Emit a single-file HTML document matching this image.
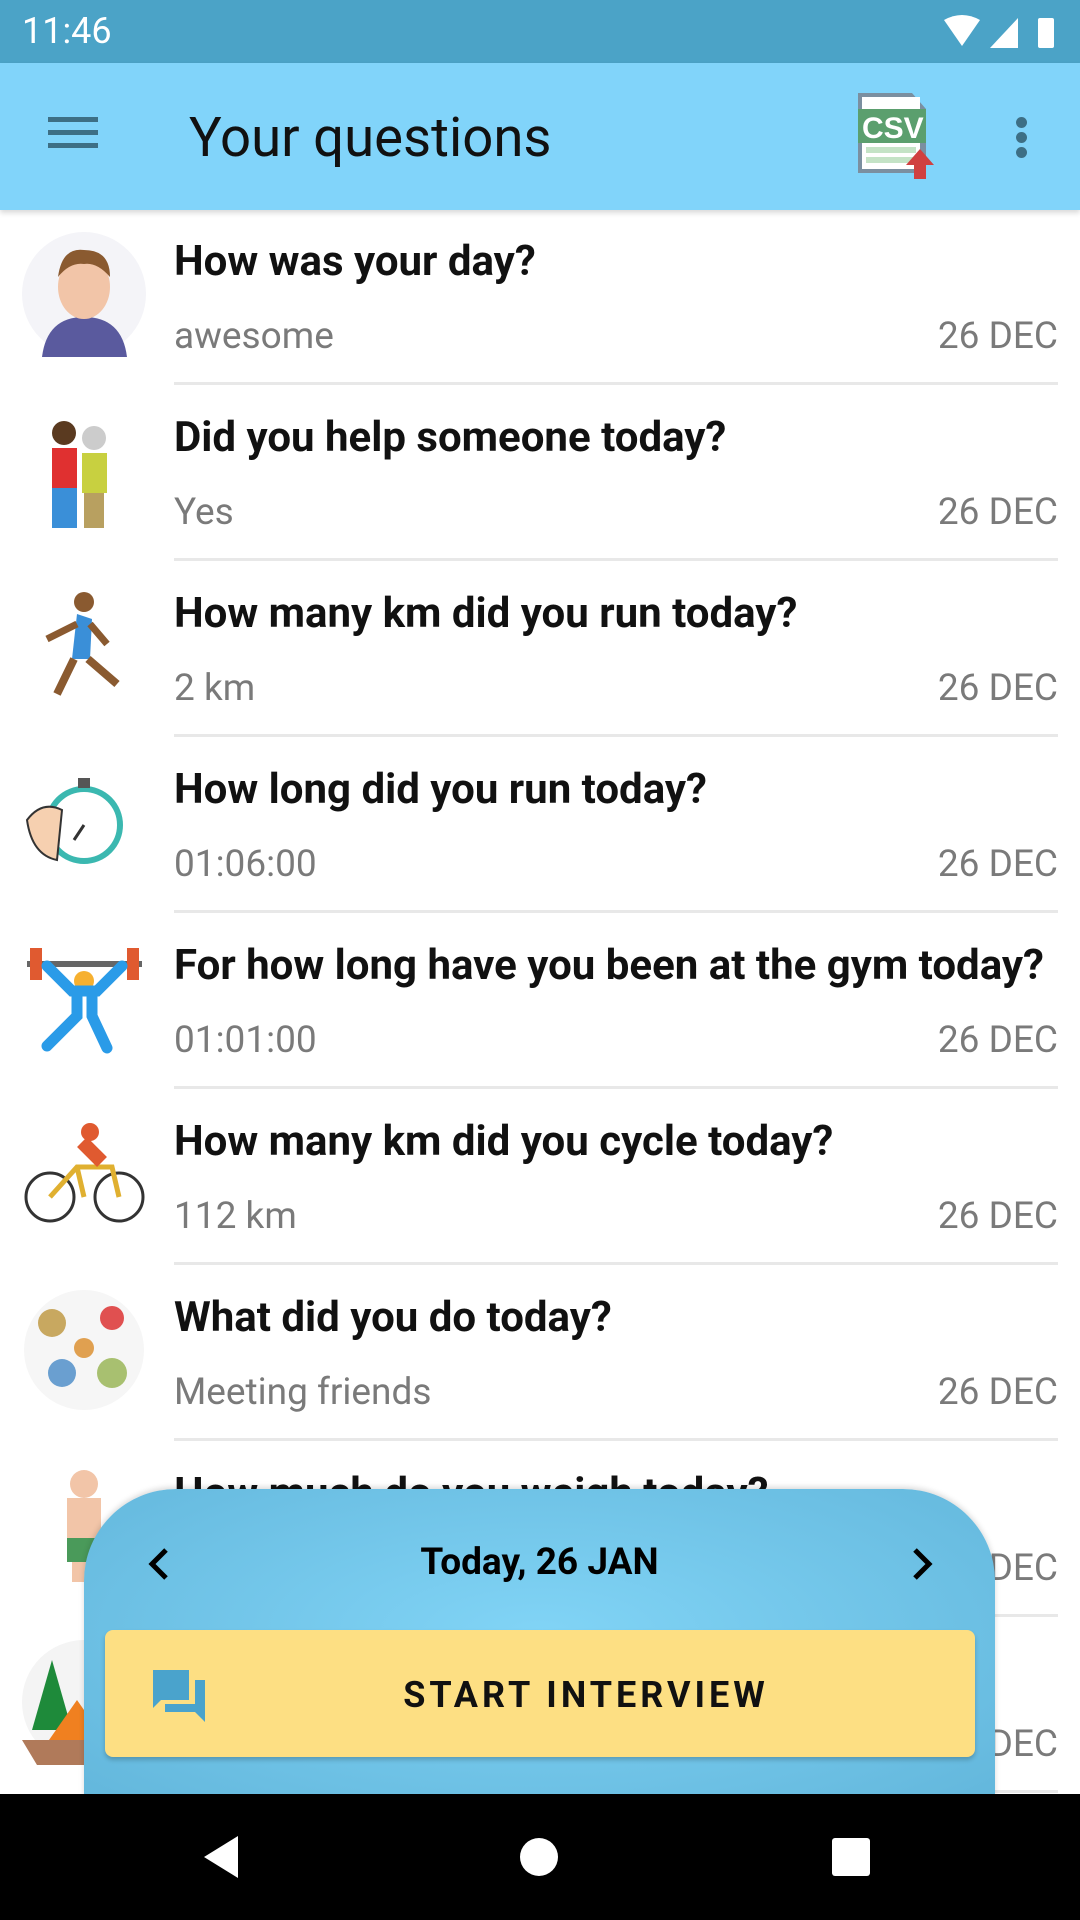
<!DOCTYPE html>
<html><head><meta charset="utf-8"><style>
*{margin:0;padding:0;box-sizing:border-box}
body{width:1080px;height:1920px;overflow:hidden;background:#fff;font-family:"Roboto","Liberation Sans",sans-serif;position:relative}
.sb{position:absolute;left:0;top:0;width:1080px;height:63px;background:#4ba3c7;color:#fff;font-size:36px}
.ab{position:absolute;left:0;top:63px;width:1080px;height:147px;background:#81d4fa;box-shadow:0 3px 5px rgba(0,0,0,.15)}
.row{position:absolute;left:0;width:1080px;height:176px}
.t{position:absolute;left:174px;top:27px;font-size:42px;font-weight:bold;color:#111;white-space:nowrap}
.s{position:absolute;left:174px;top:105px;font-size:37px;color:#7a7a7a}
.d{position:absolute;right:22px;top:105px;font-size:37px;color:#7a7a7a}
.ln{position:absolute;left:174px;right:22px;top:172px;height:3px;background:#e8e8e8}
.ic{position:absolute;left:22px;top:22px;width:125px;height:125px}
</style></head><body>
<div class="sb"><span style="position:absolute;left:22px;top:10px">11:46</span>
<svg style="position:absolute;left:940px;top:14px" width="120" height="36" viewBox="0 0 120 36"><path d="M4 6 Q22 -4 40 6 L22 32Z" fill="#fff"/><path d="M50 34 L78 4 L78 34Z" fill="#fff"/><rect x="98" y="4" width="16" height="30" rx="2" fill="#fff"/></svg></div>
<div class="ab">
<div style="position:absolute;left:48px;top:54px;width:50px;height:5px;background:#3d6f85;box-shadow:0 13px 0 #3d6f85,0 26px 0 #3d6f85"></div>
<div style="position:absolute;left:189px;top:43px;font-size:54.5px;color:#111">Your questions</div>
<svg style="position:absolute;left:858px;top:30px" width="86" height="86" viewBox="0 0 86 86"><path d="M0 0H54L68 16V80H0Z" fill="#7b8fa0"/><rect x="4" y="4" width="58" height="72" fill="#fff"/><rect x="0" y="16" width="68" height="34" fill="#5b9f6e"/><text x="4" y="45" font-size="30" font-weight="bold" fill="#fff" font-family="Liberation Sans">CSV</text><rect x="8" y="54" width="50" height="6" fill="#c4e3c6"/><rect x="8" y="64" width="50" height="6" fill="#c4e3c6"/><path d="M56 86V72H48L62 56L76 72H68V86Z" fill="#d04040"/></svg>
<div style="position:absolute;left:1016px;top:54px;width:11px;height:11px;border-radius:50%;background:#3d6f85;box-shadow:0 15px 0 #3d6f85,0 30px 0 #3d6f85"></div>
</div>

<div class="row" style="top:210px"><svg class="ic" viewBox="0 0 125 125"><circle cx="62" cy="62" r="62" fill="#f4f4f8"/><path d="M20 125 Q25 85 62 85 Q100 85 105 125Z" fill="#5a5a9e"/><ellipse cx="62" cy="55" rx="26" ry="32" fill="#f2c5a8"/><path d="M36 45 Q40 15 62 18 Q88 18 88 45 Q75 30 62 32 Q48 30 36 45Z" fill="#8a5a30"/></svg><div class="t">How was your day?</div><div class="s">awesome</div><div class="d">26 DEC</div><div class="ln"></div></div>
<div class="row" style="top:386px"><svg class="ic" viewBox="0 0 125 125"><rect x="30" y="40" width="25" height="40" fill="#e03030"/><rect x="30" y="80" width="25" height="40" fill="#3a8fd8"/><circle cx="42" cy="25" r="12" fill="#5a3a20"/><rect x="60" y="45" width="25" height="40" fill="#c8d040"/><rect x="62" y="85" width="20" height="35" fill="#b8a060"/><circle cx="72" cy="30" r="12" fill="#ccc"/></svg><div class="t">Did you help someone today?</div><div class="s">Yes</div><div class="d">26 DEC</div><div class="ln"></div></div>
<div class="row" style="top:562px"><svg class="ic" viewBox="0 0 125 125"><circle cx="62" cy="18" r="10" fill="#8a5a30"/><path d="M55 30 L70 35 L68 75 L50 75Z" fill="#3a8fd8"/><path d="M52 75 L35 110 M66 75 L95 100" stroke="#8a5a30" stroke-width="8"/><path d="M55 40 L25 55 M68 40 L85 60" stroke="#8a5a30" stroke-width="7"/></svg><div class="t">How many km did you run today?</div><div class="s">2 km</div><div class="d">26 DEC</div><div class="ln"></div></div>
<div class="row" style="top:738px"><svg class="ic" viewBox="0 0 125 125"><circle cx="62" cy="65" r="36" fill="#fff" stroke="#3bb8b0" stroke-width="6"/><rect x="56" y="18" width="12" height="10" fill="#555"/><path d="M62 65 L52 80" stroke="#333" stroke-width="3"/><path d="M5 60 Q20 40 40 50 L35 100 Q10 95 5 60Z" fill="#f6d0b0" stroke="#333" stroke-width="2"/></svg><div class="t">How long did you run today?</div><div class="s">01:06:00</div><div class="d">26 DEC</div><div class="ln"></div></div>
<div class="row" style="top:914px"><svg class="ic" viewBox="0 0 125 125"><rect x="5" y="25" width="115" height="6" fill="#666"/><rect x="8" y="12" width="12" height="32" fill="#e05a30"/><rect x="105" y="12" width="12" height="32" fill="#e05a30"/><circle cx="62" cy="45" r="10" fill="#f6b030"/><path d="M25 30 L50 55 L75 55 L100 30 M55 55 L55 80 L25 110 M70 55 L70 80 L85 112" stroke="#2a9be8" stroke-width="11" fill="none" stroke-linecap="round"/></svg><div class="t">For how long have you been at the gym today?</div><div class="s">01:01:00</div><div class="d">26 DEC</div><div class="ln"></div></div>
<div class="row" style="top:1090px"><svg class="ic" viewBox="0 0 125 125"><circle cx="28" cy="85" r="24" fill="none" stroke="#333" stroke-width="3"/><circle cx="97" cy="85" r="24" fill="none" stroke="#333" stroke-width="3"/><path d="M28 85 L55 55 L90 55 L97 85 M55 55 L62 85" stroke="#e0b030" stroke-width="5" fill="none"/><path d="M60 30 L80 50" stroke="#e05a30" stroke-width="14"/><circle cx="68" cy="20" r="9" fill="#e05a30"/></svg><div class="t">How many km did you cycle today?</div><div class="s">112 km</div><div class="d">26 DEC</div><div class="ln"></div></div>
<div class="row" style="top:1266px"><svg class="ic" viewBox="0 0 125 125"><circle cx="62" cy="62" r="60" fill="#f6f6f6"/><circle cx="30" cy="35" r="14" fill="#c8a860"/><circle cx="90" cy="30" r="12" fill="#e05050"/><circle cx="40" cy="85" r="14" fill="#6a9fd0"/><circle cx="90" cy="85" r="15" fill="#a8c070"/><circle cx="62" cy="60" r="10" fill="#e0a050"/></svg><div class="t">What did you do today?</div><div class="s">Meeting friends</div><div class="d">26 DEC</div><div class="ln"></div></div>
<div class="row" style="top:1442px"><svg class="ic" viewBox="0 0 125 125"><circle cx="62" cy="20" r="14" fill="#f2c5a8"/><rect x="45" y="34" width="34" height="40" fill="#f2c5a8"/><rect x="45" y="74" width="34" height="24" fill="#4a9a5a"/><rect x="50" y="98" width="24" height="20" fill="#f2c5a8"/></svg><div class="t">How much do you weigh today?</div><div class="s"></div><div class="d">26 DEC</div><div class="ln"></div></div>
<div class="row" style="top:1618px"><svg class="ic" viewBox="0 0 125 125"><circle cx="62" cy="62" r="62" fill="#f4f4f4"/><path d="M30 20 L10 90 L50 90Z" fill="#1e8a3a"/><path d="M20 110 L55 60 L90 110Z" fill="#f08020"/><path d="M0 100 L125 100 L110 125 L15 125Z" fill="#b07a5a"/></svg><div class="t"></div><div class="s"></div><div class="d">26 DEC</div><div class="ln"></div></div>

<div style="position:absolute;left:84px;top:1489px;width:911px;height:320px;border-radius:92px 92px 0 0;background:radial-gradient(ellipse at 50% 45%,#81d4f6,#62b6db);box-shadow:0 -2px 6px rgba(0,0,0,.15)">
<svg style="position:absolute;left:62px;top:58px" width="26" height="34" viewBox="0 0 26 34"><path d="M20 3 L6 17 L20 31" stroke="#000" stroke-width="5" fill="none"/></svg>
<div style="position:absolute;left:0;width:911px;top:52px;text-align:center;font-size:37px;font-weight:bold;color:#000">Today, 26 JAN</div>
<svg style="position:absolute;left:825px;top:58px" width="26" height="34" viewBox="0 0 26 34"><path d="M6 3 L20 17 L6 31" stroke="#000" stroke-width="5" fill="none"/></svg>
<div style="position:absolute;left:21px;top:141px;width:870px;height:127px;background:#fddf83;border-radius:8px;box-shadow:0 3px 5px rgba(0,0,0,.2)">
<svg style="position:absolute;left:46px;top:38px" width="56" height="56" viewBox="0 0 56 56"><path d="M2 2H38V32H10L2 40Z" fill="#4aa3cc"/><path d="M44 12H54V54L44 44H14V36H44Z" fill="#4aa3cc"/></svg>
<div style="position:absolute;left:0;width:870px;padding-left:92px;top:44px;text-align:center;font-size:36px;font-weight:bold;letter-spacing:4px;color:#111">START INTERVIEW</div>
</div></div>

<div style="position:absolute;left:0;top:1794px;width:1080px;height:126px;background:#000">
<svg style="position:absolute;left:200px;top:40px" width="46" height="46" viewBox="0 0 46 46"><path d="M38 2V44L4 23Z" fill="#fff"/></svg>
<div style="position:absolute;left:520px;top:44px;width:38px;height:38px;border-radius:50%;background:#fff"></div>
<div style="position:absolute;left:832px;top:44px;width:38px;height:38px;border-radius:3px;background:#fff"></div>
</div>
</body></html>
